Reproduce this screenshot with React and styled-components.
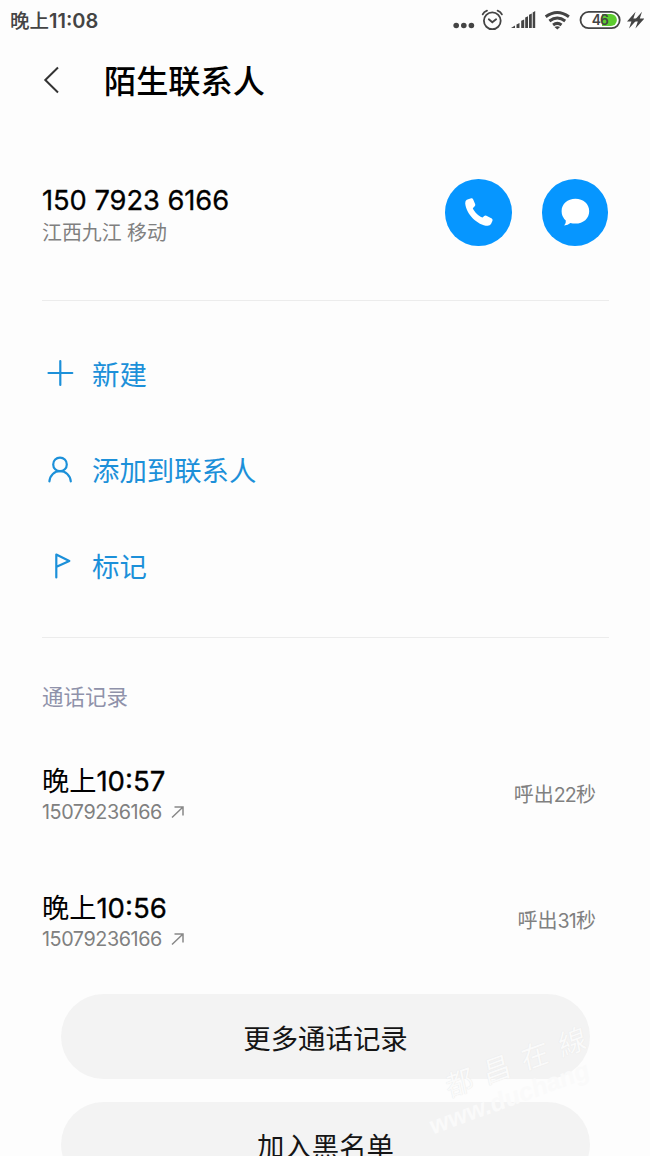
import React from 'react';
import styled, { createGlobalStyle } from 'styled-components';

const GlobalStyle = createGlobalStyle`
  * {
    box-sizing: border-box;
  }

  body {
    margin: 0;
    background: #fdfdfd;
    font-family: 'Noto Sans CJK SC', sans-serif;
    overflow: hidden;
  }
`;

const Screen = styled.div`
  position: relative;
  width: 650px;
  height: 1156px;
  overflow: hidden;
  background: #fdfdfd;
  display: flex;
  flex-direction: column;
`;

const StatusBar = styled.div`
  height: 40px;
  flex-shrink: 0;
  padding: 0 6px 0 10px;
  display: flex;
  align-items: center;
  justify-content: space-between;
  font-size: 19.5px;
  font-weight: 500;
  line-height: 40px;
  color: #444;
`;

const Digits = styled.span`
  font-family: Inter, sans-serif;
  font-size: ${props => props.$size}px;
  font-weight: ${props => props.$weight || 400};
  letter-spacing: ${props => props.$spacing || 0}px;
  -webkit-text-stroke: ${props => props.$stroke || 0}px currentColor;
`;

const StatusIcons = styled.svg`
  display: block;
  width: 194px;
  height: 40px;
`;

const Header = styled.header`
  height: 80px;
  flex-shrink: 0;
  padding-left: 42px;
  display: flex;
  align-items: center;
`;

const BackButton = styled.button`
  width: 62px;
  height: 80px;
  padding: 0;
  border: 0;
  background: none;
  display: flex;
  align-items: center;
`;

const Title = styled.h1`
  margin: 0;
  padding-bottom: 2px;
  font-size: 32.2px;
  font-weight: 500;
  line-height: 78px;
  color: #000;
`;

const Profile = styled.section`
  height: 181px;
  flex-shrink: 0;
  margin: 0 41px 0 42px;
  padding-top: 59px;
  border-bottom: 1px solid #ececec;
  display: flex;
  justify-content: space-between;
`;

const PhoneNumber = styled.div`
  height: 35px;
  margin-top: 4px;
  line-height: 36px;
  color: #000;
  white-space: nowrap;
`;

const Place = styled.div`
  height: 28px;
  font-size: 19.9px;
  line-height: 28px;
  color: #808080;
  word-spacing: 1px;
`;

const Actions = styled.div`
  display: flex;
  gap: 29.7px;
  padding-right: 1px;
`;

const RoundButton = styled.button`
  width: 66.5px;
  height: 66.5px;
  padding: 0;
  border: 0;
  border-radius: 50%;
  background: #0696ff;

  svg {
    display: block;
  }
`;

const Menu = styled.nav`
  height: 337px;
  flex-shrink: 0;
  margin: 0 41px 0 42px;
  padding-top: 24px;
  border-bottom: 1px solid #ececec;
`;

const MenuItem = styled.a`
  height: 96.4px;
  display: flex;
  align-items: center;
  gap: 14px;
  font-size: 27.4px;
  line-height: 40px;
  color: #1c90d9;

  svg {
    display: block;
  }
`;

const MenuLabel = styled.span`
  padding-bottom: 1px;
`;

const SectionTitle = styled.h2`
  height: 40px;
  flex-shrink: 0;
  margin: 38px 0 0 42px;
  font-size: 21.5px;
  font-weight: 400;
  line-height: 40px;
  color: #8f92aa;
`;

const CallList = styled.div`
  flex-shrink: 0;
  padding: 15px 54px 0 42px;
`;

const Call = styled.div`
  height: 126.5px;
  display: flex;
  align-items: center;
  justify-content: space-between;
`;

const CallTime = styled.div`
  height: 36px;
  font-size: 27.2px;
  line-height: 34px;
  color: #000;
`;

const CallNumber = styled.div`
  height: 28px;
  line-height: 28px;
  color: #808080;
  display: flex;
  align-items: center;
  gap: 9px;
`;

const Duration = styled.div`
  font-size: 20px;
  line-height: 30px;
  color: #808080;
`;

const Buttons = styled.div`
  flex-shrink: 0;
  margin: 10px 60px 0 61px;
  display: flex;
  flex-direction: column;
  gap: 23px;
`;

const PillButton = styled.button`
  height: 85px;
  padding: 2px 0 0;
  border: 0;
  border-radius: 43px;
  background: #f3f3f3;
  font-family: inherit;
  font-size: 27.4px;
  line-height: 83px;
  color: #151515;
`;

const Watermark = styled.div`
  position: absolute;
  left: ${props => props.$x}px;
  top: ${props => props.$y}px;
  transform: rotate(-20deg) skewX(-8deg);
  transform-origin: 0 50%;
  font-family: ${props => (props.$latin ? "'Liberation Sans'" : "'Noto Sans CJK TC'")}, sans-serif;
  font-size: ${props => (props.$latin ? 25 : 28)}px;
  font-weight: ${props => (props.$latin ? 700 : 400)};
  line-height: 32px;
  letter-spacing: ${props => (props.$latin ? 0 : 12)}px;
  white-space: nowrap;
  color: #fafafa;
  text-shadow: ${props => (props.$latin ? 'none' : '0 0 1px #e2e2e2')};
  pointer-events: none;
`;

const menuItems = [
  {
    label: '新建',
    icon: <path d="M18.3 7v24M6.5 19h23.8" />,
  },
  {
    label: '添加到联系人',
    icon: (
      <>
        <circle cx="18" cy="13.4" r="6.8" />
        <path d="M7.4 30.4C8 24.2 12.4 20.2 18 20.2S28.2 24.2 28.8 30.4" />
      </>
    ),
  },
  {
    label: '标记',
    icon: <path d="M14.3 30.5V7.5l13 6.6-11.6 5.2" />,
  },
];

const calls = [
  { time: '10:57', number: '15079236166', seconds: '22' },
  { time: '10:56', number: '15079236166', seconds: '31' },
];

const App = () => (
  <>
    <GlobalStyle />
    <Screen>
      <StatusBar>
        <span>
          晚上<Digits $size={20} $weight={600}>11:08</Digits>
        </span>
        <StatusIcons viewBox="450 0 194 40" fill="#444">
          <circle cx="456.2" cy="25.5" r="2.8" />
          <circle cx="463.8" cy="25.5" r="2.8" />
          <circle cx="471.4" cy="25.5" r="2.8" />
          <g fill="none" stroke="#444" strokeWidth="1.8" strokeLinecap="round">
            <circle cx="492.3" cy="20.8" r="8.4" />
            <path d="M488.8 19.3l3.5 3 3.8-3M482.7 14.4q1.2-2.7 4.3-3.8M501.9 14.4q-1.2-2.7-4.3-3.8" />
          </g>
          <path d="M511 28l4-2.6V28zM516.5 24.6l3-1.6v5h-3zM521.2 20.8l3-1.3V28h-3zM525.2 17.5l2.8-1.3V28h-2.8zM529 14.8l2.8-1.4V28H529zM532.7 12.5l2.5-1.4V28h-2.5z" />
          <g fill="none" stroke="#444" strokeWidth="3">
            <path d="M545.7 16.7q11.6-8.4 23.2 0" />
            <path d="M549.4 21q7.9-6 15.8 0" />
            <path d="M553.1 25q4.2-3.2 8.4 0" />
          </g>
          <path d="M554.5 27q2.8-1.7 5.6 0l-2.8 2.6z" />
          <rect x="580.5" y="11.9" width="39.2" height="16.3" rx="8.15" fill="#fff" stroke="#444" strokeWidth="1.8" />
          <path d="M602 14h8.9a6 6 0 0 1 0 12H602z" fill="#5dcc2f" />
          <text x="591.8" y="25" fontFamily="Inter" fontSize="13.8" fontWeight="600" letterSpacing="-1">46</text>
          <path d="M635.6 11.8l-8.6 9.8h4.4l-2.4 6.8 9-9.8h-4.6z" />
          <path d="M642.6 11.8l-8.6 9.8h4.4l-2.4 6.8 9-9.8h-4.6z" transform="translate(-.6)" />
        </StatusIcons>
      </StatusBar>

      <Header>
        <BackButton aria-label="返回">
          <svg width="20" height="30" fill="none" stroke="#333" strokeWidth="2">
            <path d="M16 2.5L3.3 15 16 27.5" />
          </svg>
        </BackButton>
        <Title>陌生联系人</Title>
      </Header>

      <Profile>
        <div>
          <PhoneNumber>
            <Digits $size={27.3} $spacing={-0.05} $stroke={0.3}>150 7923 6166</Digits>
          </PhoneNumber>
          <Place>江西九江 移动</Place>
        </div>
        <Actions>
          <RoundButton aria-label="拨打">
            <svg width="66" height="66" fill="#fff">
              <path d="M21.8 20.8L26.2 19.2Q27.6 19 28.2 20.4L30.2 25.2Q30.6 26.4 29.7 27.2L27.8 29.2C29.4 33 33.4 36.8 37.6 38.6L39.2 36.9Q40.2 36.1 41.4 36.7L46.8 39.5Q47.9 40.3 47.5 41.7L46 45Q45 46.8 42.7 46.8C32.5 46.4 21 35 20.2 24.2Q20.2 21.7 21.8 20.8Z" />
            </svg>
          </RoundButton>
          <RoundButton aria-label="短信">
            <svg width="66" height="66" fill="#fff">
              <path d="M33.4 19.8C41.4 19.8 47.2 25 47.2 32.2S41.4 44.6 33.4 44.6Q30.5 44.6 28.4 44Q26 46.2 22.2 46.4Q24.2 44.4 23.8 41.4Q19.6 37.8 19.6 32.2C19.6 25 25.6 19.8 33.4 19.8Z" />
            </svg>
          </RoundButton>
        </Actions>
      </Profile>

      <Menu>
        {menuItems.map(item => (
          <MenuItem key={item.label}>
            <svg width="36" height="38" fill="none" stroke="currentColor" strokeWidth="2.2" strokeLinecap="round" strokeLinejoin="round">
              {item.icon}
            </svg>
            <MenuLabel>{item.label}</MenuLabel>
          </MenuItem>
        ))}
      </Menu>

      <SectionTitle>通话记录</SectionTitle>
      <CallList>
        {calls.map(call => (
          <Call key={call.time}>
            <div>
              <CallTime>
                晚上<Digits $size={27.6} $stroke={0.3}>{call.time}</Digits>
              </CallTime>
              <CallNumber>
                <Digits $size={19.8} $spacing={-0.43}>{call.number}</Digits>
                <svg width="14" height="14" fill="none" stroke="#888" strokeWidth="1.5">
                  <path d="M1 12.5L12 2M3.5 2H12v8.5" />
                </svg>
              </CallNumber>
            </div>
            <Duration>
              呼出<Digits $size={19.6} $spacing={-0.8}>{call.seconds}</Digits>秒
            </Duration>
          </Call>
        ))}
      </CallList>

      <Buttons>
        <PillButton>更多通话记录</PillButton>
        <PillButton>加入黑名单</PillButton>
      </Buttons>

      <Watermark $x={446} $y={1070}>都昌在線</Watermark>
      <Watermark $x={430} $y={1110} $latin>www.duchang</Watermark>
    </Screen>
  </>
);

export default App;
